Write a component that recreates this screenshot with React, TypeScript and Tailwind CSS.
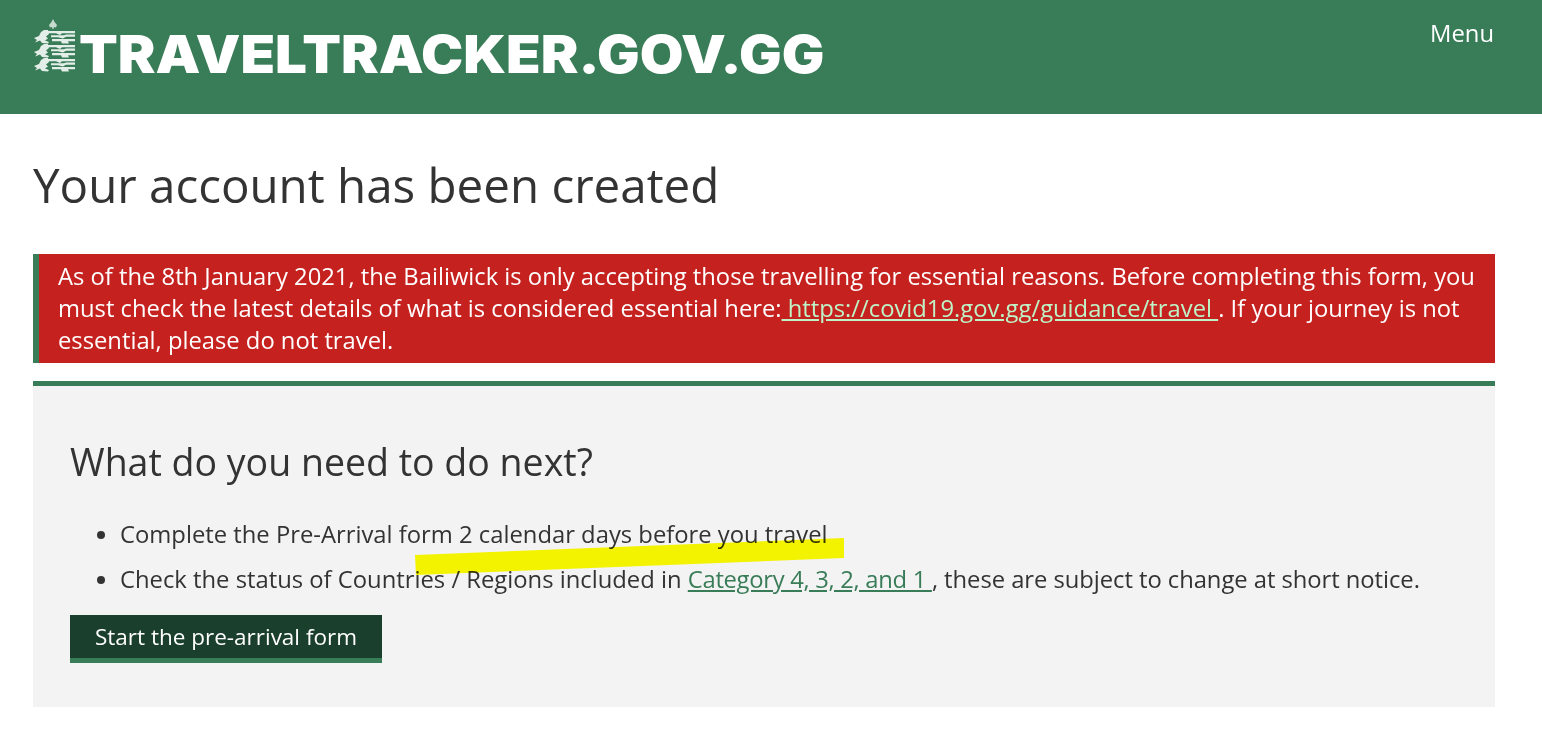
import React from "react";

function Leopard({ y }: { y: number }) {
  return (
    <g transform={`translate(0 ${y})`} fill="#e4eee8">
      <path d="M1 8 L6 6 L8 2 L11 0 L15 0 L16 4 L13 6.5 L15 8.5 L12 10.5 L16 12 L15 13.5 L9 13 L7 10.5 L2 12.5 L4 10 Z" />
      <path d="M15 1 H42 V3.2 H29 L27 5 L23 3.2 H15 Z" />
      <path d="M18 5.2 H31 L33 4.6 H42 V6.8 H33 L30 8.4 L25 7.2 H18 Z" />
      <path d="M19 9 H42 V11.2 H35 L36 13.5 H29 L28 11.2 H19 Z" />
    </g>
  );
}

function Crest() {
  return (
    <svg width="42" height="55" viewBox="0 0 42 55" className="shrink-0">
      <path d="M20 0 L21.5 3 L24 6 L23 8.5 L21 8 L20.5 10 H19.5 L19 8 L17 8.5 L16 6 L18.5 3 Z" fill="#c6dbce" />
      <Leopard y={11} />
      <Leopard y={25} />
      <Leopard y={39} />
    </svg>
  );
}

export default function App() {
  return (
    <div className="relative min-h-[752px] bg-white font-['Open_Sans',sans-serif] text-[#333333]">
      <header className="flex h-[114px] items-start justify-between bg-[#397c58] pl-[33px] pr-[48px] text-white">
        <a className="mt-[19px] flex items-start">
          <Crest />
          <span className="mt-[6px] ml-[4px] origin-left scale-x-[1.087] font-['Inter',sans-serif] text-[52px] leading-[60px] font-black whitespace-nowrap">
            TRAVELTRACKER.GOV.GG
          </span>
        </a>
        <span className="mt-[18px] text-[23.8px] leading-[30px]">Menu</span>
      </header>

      <main className="px-[33px] pr-[47px]">
        <h1 className="mt-[39px] text-[47.5px] leading-[64px] font-normal">Your account has been created</h1>

        <div className="mt-[37px] border-l-[6px] border-[#397c58] bg-[#c5211e] pt-[6px] pb-[7px] pl-[19px] pr-[15px] text-[23.77px] leading-[32px] text-white">
          As of the 8th January 2021, the Bailiwick is only accepting those travelling for essential reasons. Before completing this form, you must check the latest details of what is considered essential here:
          <a className="text-[#bff3c7] underline"> https://covid19.gov.gg/guidance/travel </a>
          . If your journey is not essential, please do not travel.
        </div>

        <section className="mt-[18px] h-[326px] border-t-[5px] border-[#397c58] bg-[#f3f3f3] px-[37px] pt-[52px]">
          <h2 className="text-[37.5px] leading-[48px] font-normal">What do you need to do next?</h2>
          <ul className="mt-[33px] list-disc pl-[50px] text-[23.8px] leading-[30px]">
            <li>Complete the Pre-Arrival form 2 calendar days before you travel</li>
            <li className="mt-[15px]">
              Check the status of Countries / Regions included in{" "}
              <a className="tracking-[-0.3px] text-[#397c58] underline">Category 4, 3, 2, and 1 </a>
              <span className="tracking-[-0.05px]">, these are subject to change at short notice.</span>
            </li>
          </ul>
          <a className="mt-[21px] inline-block border-b-[5px] border-[#397c58] bg-[#1b3f2d] px-[25px] py-[6px] text-[22.5px] leading-[31px] text-white">
            Start the pre-arrival form
          </a>
        </section>
      </main>

      <svg className="absolute left-[415px] top-[537px] mix-blend-multiply" width="430" height="39" viewBox="0 0 430 39">
        <polygon points="0,18 429,1 429,21 1,38" fill="#ffff00" />
      </svg>
    </div>
  );
}
